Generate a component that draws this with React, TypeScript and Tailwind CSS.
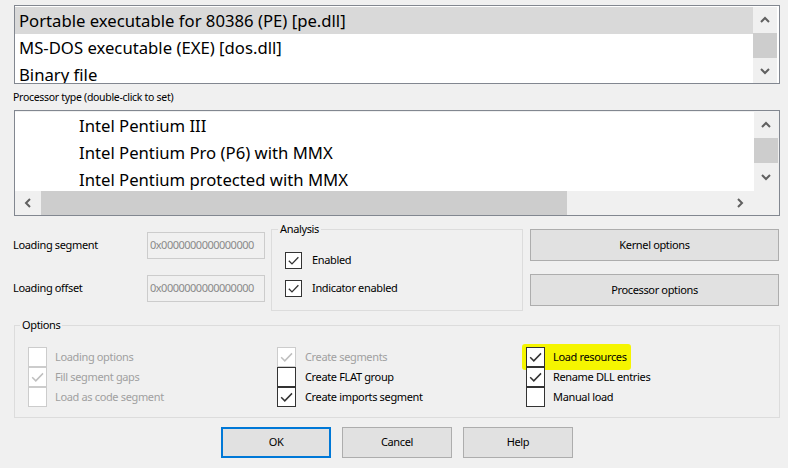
import React from "react";

const FONT = { fontFamily: '"Noto Sans", "Liberation Sans", sans-serif' };

// small dialog text: narrowed to take Segoe UI's widths
const SM = "text-[11px] tracking-[-0.35px]";

function Chevron({ dir }: { dir: "up" | "down" | "left" | "right" }) {
    const pts = {
        up: "1,7 5,3 9,7",
        down: "1,3 5,7 9,3",
        left: "7,1 3,5 7,9",
        right: "3,1 7,5 3,9",
    }[dir];
    return (
        <svg width="10" height="10" viewBox="0 0 10 10">
            <polyline points={pts} fill="none" stroke="#606060" strokeWidth="2" />
        </svg>
    );
}

function Check({ color }: { color: string }) {
    return (
        <svg className="w-full h-full" viewBox="0 0 16 16">
            <polyline points="3,8.2 6.4,11.6 13.2,4.6" fill="none" stroke={color} strokeWidth="1.4" />
        </svg>
    );
}

function CheckBox({ checked, disabled, big }: { checked?: boolean; disabled?: boolean; big?: boolean }) {
    return (
        <span
            className={
                (big ? "w-[19px] h-[20px] " : "w-[17px] h-[17px] ") +
                "shrink-0 border bg-white flex " +
                (disabled ? "border-[#cccccc]" : "border-[#333333]")
            }
        >
            {checked && <Check color={disabled ? "#bfbfbf" : "#333333"} />}
        </span>
    );
}

function VScroll({ h }: { h: string }) {
    return (
        <div className={"w-[24px] flex flex-col bg-[#f0f0f0] " + h}>
            <div className="h-[26px] flex items-center justify-center">
                <Chevron dir="up" />
            </div>
            <div className="h-[25px] bg-[#cdcdcd]" />
            <div className="flex-1 flex items-center justify-center">
                <Chevron dir="down" />
            </div>
        </div>
    );
}

function Button({ label, cls }: { label: string; cls: string }) {
    return (
        <button className={"bg-[#e1e1e1] border border-[#adadad] text-black " + SM + " " + cls}>
            {label}
        </button>
    );
}

function OptRow({
    checked,
    disabled,
    label,
    gap = "gap-[8px]",
}: {
    checked?: boolean;
    disabled?: boolean;
    label: string;
    gap?: string;
}) {
    return (
        <div className={"flex items-center h-[20px] " + gap}>
            <CheckBox big checked={checked} disabled={disabled} />
            <span className={SM + " " + (disabled ? "text-[#a0a0a0]" : "text-black")}>{label}</span>
        </div>
    );
}

export default function App() {
    return (
        <div className="w-[788px] h-[468px] bg-[#f0f0f0] overflow-hidden flex flex-col" style={FONT}>
            {/* loader list */}
            <div className="mt-[5px] ml-[14px] w-[766px] h-[79px] border border-[#828790] bg-white flex pt-[1px] pr-[2px]">
                <div className="flex-1 flex flex-col overflow-hidden text-[16.7px] text-black">
                    <div className="h-[27px] shrink-0 bg-[#d9d9d9] pl-[4px] flex items-center">
                        Portable executable for 80386 (PE) [pe.dll]
                    </div>
                    <div className="h-[27px] shrink-0 pl-[4px] flex items-center">
                        MS-DOS executable (EXE) [dos.dll]
                    </div>
                    <div className="h-[27px] shrink-0 pl-[4px] flex items-center">Binary file</div>
                </div>
                <VScroll h="h-[76px]" />
            </div>

            <div className="mt-[7px] ml-[13px] h-[12px] leading-[12px] text-[10.5px] tracking-[-0.3px] text-black">
                Processor type (double-click to set)
            </div>

            {/* processor list */}
            <div className="mt-[7px] ml-[14px] w-[766px] h-[106px] border border-[#828790] bg-[#f0f0f0] flex flex-col">
                <div className="flex h-[80px] pt-[1px]">
                    <div className="flex-1 bg-white flex flex-col overflow-hidden text-[16.7px] text-black">
                        <div className="h-[27px] shrink-0 pl-[64px] flex items-center">Intel Pentium III</div>
                        <div className="h-[27px] shrink-0 pl-[64px] flex items-center">
                            Intel Pentium Pro (P6) with MMX
                        </div>
                        <div className="h-[27px] shrink-0 pl-[64px] flex items-center">
                            Intel Pentium protected with MMX
                        </div>
                    </div>
                    <VScroll h="h-[79px]" />
                    <div className="w-[1px]" />
                </div>
                <div className="flex h-[24px]">
                    <div className="w-[26px] flex items-center justify-center">
                        <Chevron dir="left" />
                    </div>
                    <div className="w-[526px] bg-[#cdcdcd]" />
                    <div className="w-[185px] flex items-center justify-end pr-[7px]">
                        <Chevron dir="right" />
                    </div>
                </div>
            </div>

            {/* middle section */}
            <div className="mt-[6px] ml-[13px] flex h-[90px]">
                <div className="w-[252px] flex flex-col pt-[10px] gap-[16px]">
                    <div className="flex items-center h-[27px]">
                        <span className={"w-[134px] text-black " + SM}>Loading segment</span>
                        <span className="w-[118px] h-[27px] border border-[#cccccc] flex items-center pl-[2px] text-[11px] tracking-[-0.5px] text-[#8a8a8a] overflow-hidden whitespace-nowrap">
                            0x0000000000000000
                        </span>
                    </div>
                    <div className="flex items-center h-[27px]">
                        <span className={"w-[134px] text-black " + SM}>Loading offset</span>
                        <span className="w-[118px] h-[27px] border border-[#cccccc] flex items-center pl-[2px] text-[11px] tracking-[-0.5px] text-[#8a8a8a] overflow-hidden whitespace-nowrap">
                            0x0000000000000000
                        </span>
                    </div>
                </div>

                <fieldset className="ml-[6px] w-[252px] h-[89px] border border-[#dcdcdc]">
                    <legend className={"ml-[6px] px-[2px] h-[14px] leading-[14px] text-black " + SM}>
                        Analysis
                    </legend>
                    <div className="flex flex-col gap-[11px] mt-[16px] pl-[13px]">
                        <div className="flex items-center gap-[10px]">
                            <CheckBox checked />
                            <span className={"text-black " + SM}>Enabled</span>
                        </div>
                        <div className="flex items-center gap-[10px]">
                            <CheckBox checked />
                            <span className={"text-black " + SM}>Indicator enabled</span>
                        </div>
                    </div>
                </fieldset>

                <div className="ml-[7px] flex flex-col pt-[7px] gap-[13px]">
                    <Button label="Kernel options" cls="w-[249px] h-[32px]" />
                    <Button label="Processor options" cls="w-[249px] h-[32px]" />
                </div>
            </div>

            {/* options */}
            <fieldset className="mt-[6px] ml-[14px] w-[766px] h-[100px] border border-[#dcdcdc]">
                <legend className={"ml-[5px] px-[2px] h-[14px] leading-[14px] text-black " + SM}>Options</legend>
                <div className="mt-[15px] pl-[13px] grid grid-cols-[249px_249px_249px]">
                    <div className="flex flex-col">
                        <OptRow disabled label="Loading options" />
                        <OptRow disabled checked label="Fill segment gaps" />
                        <OptRow disabled label="Load as code segment" />
                    </div>
                    <div className="flex flex-col">
                        <OptRow disabled checked label="Create segments" gap="gap-[9px]" />
                        <OptRow label="Create FLAT group" gap="gap-[9px]" />
                        <OptRow checked label="Create imports segment" gap="gap-[9px]" />
                    </div>
                    <div className="flex flex-col">
                        <div className="flex">
                            <div className="flex items-center h-[26px] -my-[3px] -ml-[4px] pl-[4px] pr-[4px] gap-[8px] bg-[#f5f500] rounded-[3px]">
                                <CheckBox big checked />
                                <span className={"text-black " + SM}>Load resources</span>
                            </div>
                        </div>
                        <OptRow checked label="Rename DLL entries" />
                        <OptRow label="Manual load" />
                    </div>
                </div>
            </fieldset>

            {/* dialog buttons */}
            <div className="mt-[9px] ml-[221px] flex gap-[11px]">
                <Button label="OK" cls="w-[110px] h-[31px] !border-2 !border-[#0078d7]" />
                <Button label="Cancel" cls="w-[110px] h-[31px]" />
                <Button label="Help" cls="w-[110px] h-[31px]" />
            </div>
        </div>
    );
}
